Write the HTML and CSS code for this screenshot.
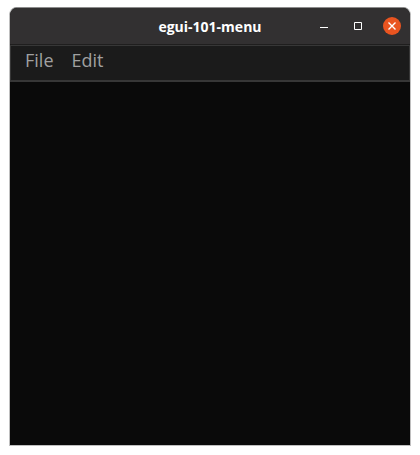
FILE: index.html
```html
<!DOCTYPE html>
<html lang="en">
<head>
<meta charset="utf-8">
<meta name="viewport" content="width=device-width, initial-scale=1">
<title>egui-101-menu</title>
<link rel="stylesheet" href="styles.css">
</head>
<body>
<main class="window">
  <header class="titlebar">
    <h1 class="title">egui-101-menu</h1>
    <div class="controls">
      <button class="control" type="button" aria-label="Minimize">
        <svg width="18" height="18" viewBox="0 0 18 18" aria-hidden="true"><path d="M5 10h8v1H5z" fill="#fff"/></svg>
      </button>
      <button class="control" type="button" aria-label="Maximize">
        <svg width="18" height="18" viewBox="0 0 18 18" aria-hidden="true"><path d="M5.500 5.500h7v7h-7z" fill="none" stroke="#fff"/></svg>
      </button>
      <button class="control close" type="button" aria-label="Close">
        <svg width="18" height="18" viewBox="0 0 18 18" aria-hidden="true"><path d="M5.500 5.500l7 7M12.500 5.500l-7 7" fill="none" stroke="#fff" stroke-width="1.400"/></svg>
      </button>
    </div>
  </header>
  <nav class="menubar">
    <button class="menu" type="button">File</button>
    <button class="menu" type="button">Edit</button>
  </nav>
  <section class="canvas"></section>
</main>
</body>
</html>
```
FILE: styles.css
```css
* {
  box-sizing: border-box;
}

body {
  display: flex;
  min-height: 100vh;
  margin: 0;
  padding: 7px 9px 9px;
  background: #fff;
  font-family: "Open Sans", "Noto Sans", sans-serif;
}

.window {
  display: flex;
  flex: 1;
  flex-direction: column;
  overflow: hidden;
  border: 1px solid #bfbfbf;
  border-top-color: #8c8c8c;
  border-radius: 8px 8px 0 0;
  background: #0a0a0a;
}

.titlebar {
  display: grid;
  grid-template-columns: 1fr auto 1fr;
  align-items: center;
  height: 37px;
  padding: 0 9px;
  border-bottom: 1px solid #1f1e1e;
  background: #323031;
}

.title {
  grid-column: 2;
  margin: 0;
  padding-top: 2px;
  color: #fff;
  font-size: 14px;
  font-weight: 700;
  line-height: 20px;
}

.controls {
  display: flex;
  gap: 16px;
  justify-content: flex-end;
}

.control {
  width: 18px;
  height: 18px;
  padding: 0;
  border: 0;
  border-radius: 50%;
  background: none;
}

.control svg {
  display: block;
}

.close {
  background: #e95420;
}

.menubar {
  display: flex;
  gap: 18px;
  height: 37px;
  padding: 1px 14px 0;
  border: 1px solid #373737;
  border-bottom-width: 2px;
  background: #1b1b1b;
}

.menu {
  padding: 0;
  border: 0;
  background: none;
  color: #a0a0a0;
  font-family: inherit;
  font-size: 18px;
  font-weight: 400;
  line-height: 26px;
  align-self: flex-start;
}

.canvas {
  flex: 1;
}
```
